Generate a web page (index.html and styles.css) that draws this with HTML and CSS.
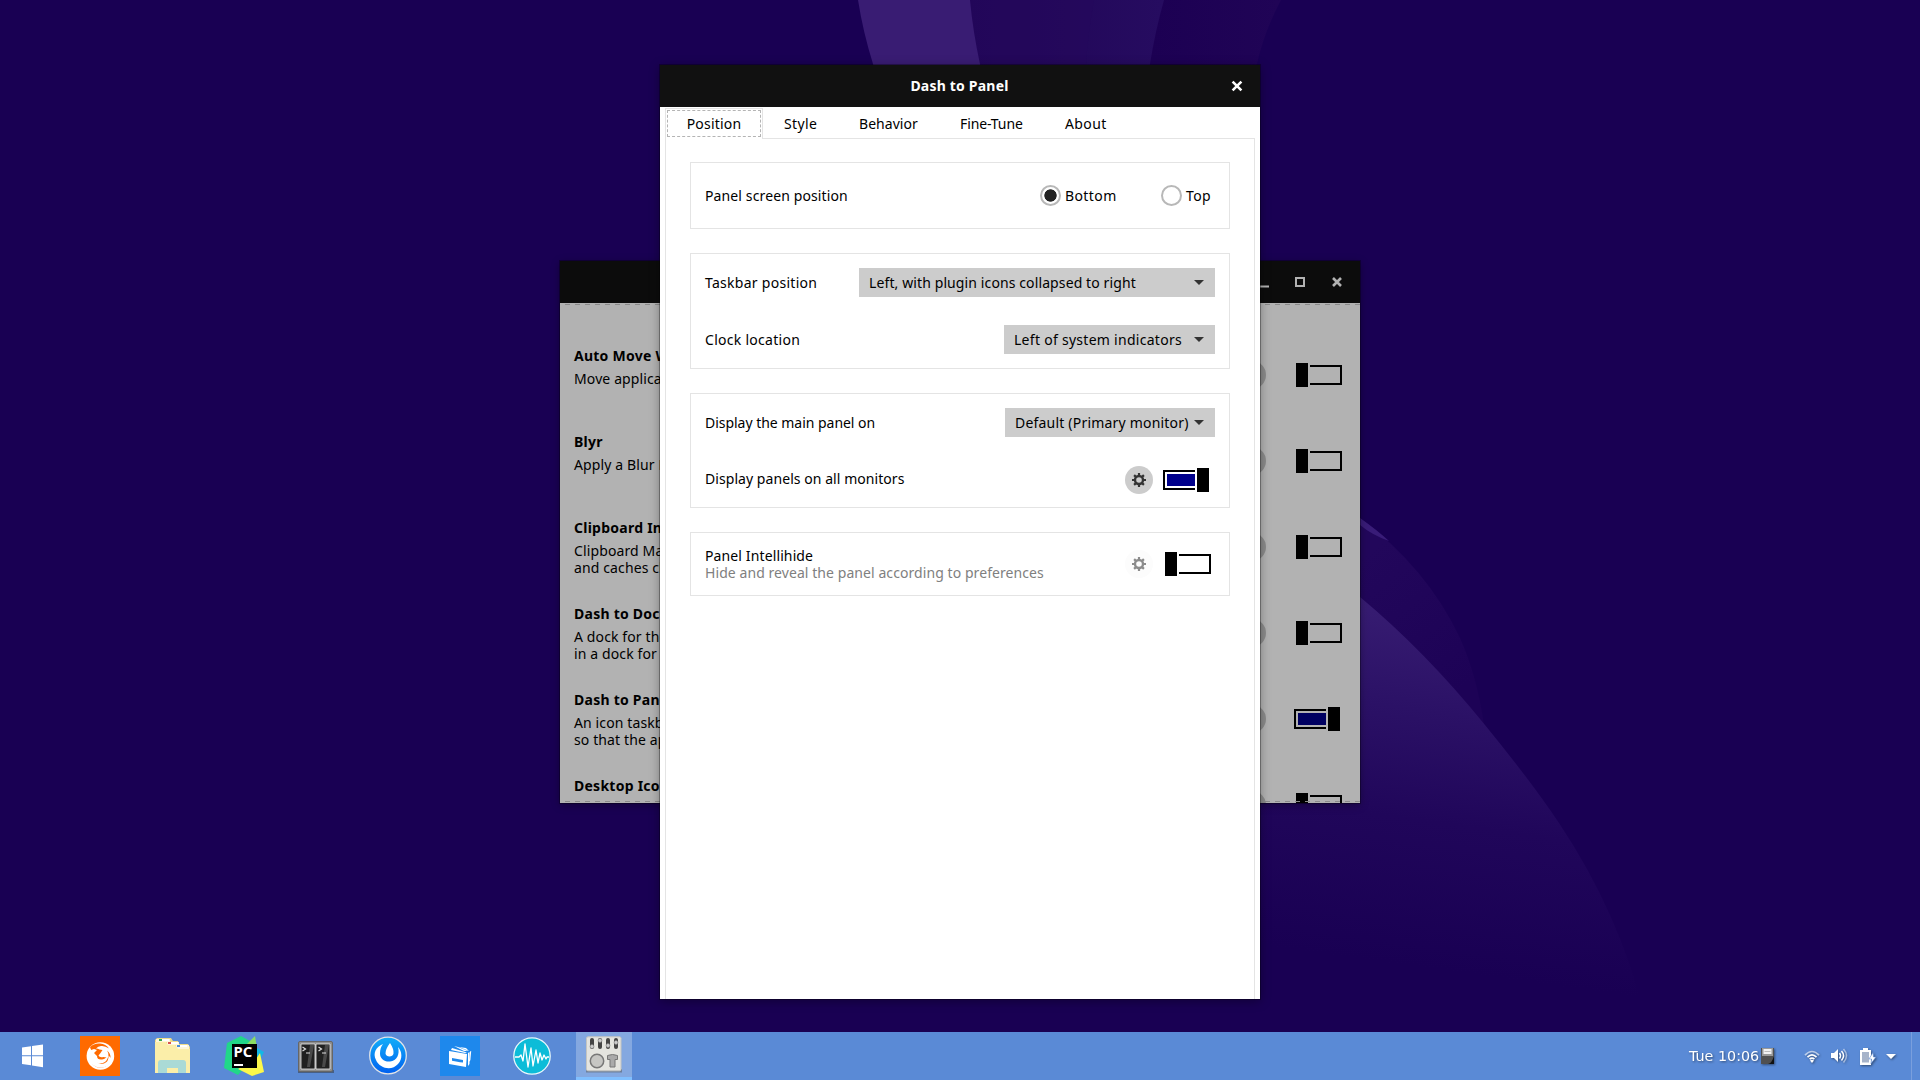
FILE: index.html
```
<!DOCTYPE html>
<html lang="en">
<head>
<meta charset="utf-8">
<title>Dash to Panel</title>
<link rel="stylesheet" href="styles.css">
</head>
<body>
<div class="desktop">
  <svg class="wallpaper" viewBox="0 0 1920 1080" aria-hidden="true">
    <defs>
      <linearGradient id="veil" x1="970" x2="1163" y1="0" y2="0" gradientUnits="userSpaceOnUse"><stop offset="0" stop-color="#200456"/><stop offset="1" stop-color="#260c60"/></linearGradient>
      <linearGradient id="veil2" x1="1150" x2="1280" y1="0" y2="0" gradientUnits="userSpaceOnUse"><stop offset="0" stop-color="#1c0053"/><stop offset="1" stop-color="#200456"/></linearGradient>
      <linearGradient id="outer" x1="1360" x2="1460" y1="560" y2="690" gradientUnits="userSpaceOnUse"><stop offset="0" stop-color="#22075b"/><stop offset="1" stop-color="#1d0256"/></linearGradient>
      <linearGradient id="hill" x1="1420" x2="1370" y1="600" y2="960" gradientUnits="userSpaceOnUse"><stop offset="0" stop-color="#381d73"/><stop offset=".3" stop-color="#2b1166"/><stop offset=".6" stop-color="#20065a"/><stop offset="1" stop-color="#190053"/></linearGradient>
    </defs>
    <path fill="url(#veil2)" d="M1160 0h121q-17 32-24 64l-12 50H1140z"/>
    <path fill="url(#veil)" d="M969 0h195q-9 32-14 64l-4 40H982z"/>
    <path fill="#24085c" d="M969 0h125q-6 32-8 64v40H982z" opacity=".6"/>
    <path fill="#391c73" d="M858 0h112q3 32 10 64l6 30H880l-7-30Q863 32 858 0z"/>
    <path fill="url(#outer)" d="M1340 503l20 15q67 50 100 120 17 38 24 87l-40 80h-104z"/>
    <path fill="#391c78" d="M1340 503l20 15q17 12 29 23-17-6-29-16l-20-14z"/>
    <path fill="url(#hill)" d="M1300 550l60 47q65 54 125 128 45 55 74 98 60 90 85 190H1000V803h300z"/>
  </svg>

  <section class="window extensions">
    <header class="titlebar">
      <svg class="win-icon" viewBox="0 0 12 12"><path d="M1 10.5h11" stroke-width="2"/></svg>
      <svg class="win-icon" viewBox="0 0 12 12"><path d="M2 2h8v8H2z" stroke-width="2"/></svg>
      <svg class="win-icon" viewBox="0 0 12 12"><path d="M2 2l8 8M10 2l-8 8" stroke-width="2.6"/></svg>
    </header>
    <div class="ext-list">
      <div class="ext"><div class="ext-text"><b>Auto Move W</b><p>Move applica</p></div><i class="ext-gear"></i><i class="switch"></i></div>
      <div class="ext"><div class="ext-text"><b>Blyr</b><p>Apply a Blur E</p></div><i class="ext-gear"></i><i class="switch"></i></div>
      <div class="ext"><div class="ext-text"><b>Clipboard Ind</b><p>Clipboard Ma<br>and caches cl</p></div><i class="ext-gear"></i><i class="switch"></i></div>
      <div class="ext"><div class="ext-text"><b>Dash to Dock</b><p>A dock for the<br>in a dock for</p></div><i class="ext-gear"></i><i class="switch"></i></div>
      <div class="ext"><div class="ext-text"><b>Dash to Pane</b><p>An icon taskb<br>so that the ap</p></div><i class="ext-gear"></i><i class="switch on"></i></div>
      <div class="ext"><div class="ext-text"><b>Desktop Icon</b></div><i class="ext-gear"></i><i class="switch"></i></div>
    </div>
  </section>

  <section class="window dialog">
    <header class="titlebar">
      <h1>Dash to Panel</h1>
      <svg class="win-icon" viewBox="0 0 12 12"><path d="M1.6 1.6l8.8 8.8M10.4 1.6l-8.8 8.8" stroke-width="2.6"/></svg>
    </header>
    <nav class="tabs">
      <div class="tab active"><span>Position</span></div>
      <div class="tab style">Style</div>
      <div class="tab behavior">Behavior</div>
      <div class="tab fine">Fine-Tune</div>
      <div class="tab about">About</div>
    </nav>
    <div class="page">
      <div class="group single">
        <div class="row">
          <span class="label">Panel screen position</span>
          <span class="radio checked"><i></i>Bottom</span>
          <span class="radio"><i></i>Top</span>
        </div>
      </div>
      <div class="group taskbar-group">
        <div class="row"><span class="label wide">Taskbar position</span><span class="combo c1">Left, with plugin icons collapsed to right</span></div>
        <div class="row"><span class="label wide">Clock location</span><span class="combo c2">Left of system indicators</span></div>
      </div>
      <div class="group monitor-group">
        <div class="row"><span class="label tight">Display the main panel on</span><span class="combo c3">Default (Primary monitor)</span></div>
        <div class="row">
          <span class="label">Display panels on all monitors</span>
          <span class="gear"><svg viewBox="-7 -7 14 14"><circle r="4" stroke-width="2.4"/><path stroke-width="2.2" d="M0-7v2.500M0 7V4.500M-7 0h2.500M7 0H4.500M-4.900-4.900l1.800 1.800M4.900-4.900L3.100-3.100M-4.900 4.900l1.800-1.800M4.900 4.900L3.100 3.100"/></svg></span>
          <i class="switch on"></i>
        </div>
      </div>
      <div class="group hide-group">
        <div class="row">
          <span class="label">Panel Intellihide<small>Hide and reveal the panel according to preferences</small></span>
          <span class="gear off"><svg viewBox="-7 -7 14 14"><circle r="4" stroke-width="2.4"/><path stroke-width="2.2" d="M0-7v2.500M0 7V4.500M-7 0h2.500M7 0H4.500M-4.900-4.900l1.800 1.800M4.900-4.900L3.100-3.100M-4.900 4.900l1.800-1.800M4.900 4.900L3.100 3.100"/></svg></span>
          <i class="switch"></i>
        </div>
      </div>
    </div>
  </section>

  <footer class="panel">
    <svg class="start" viewBox="0 0 22 24"><path fill="#fff" d="M0 3.600l9-1.300v9H0zM10 2.100L21 .5v10.800H10zM0 12.300h9v9L0 20zM10 12.300h11v11L10 21.600z"/></svg>
    <div class="apps">
      <div class="app"><svg viewBox="0 0 40 40"><path fill="#ff6a00" d="M0 0h40v40H0z"/><circle cx="20.400" cy="20" r="13.800" fill="#fff"/><path fill="#ff6a00" d="M10 11q4-4 10-3.500 6 .5 9 5-4-3-8-2.500-3 .2-5 2.500 2 0 3.500 1l3 .5-2 3-2 2.500q1 2.500 5 1.500l3 .5q-2 1-3 2-3 2-6 1l-4-1.500q2 4 6 4.500 6 0 8-5 2-4-.5-8 4 3 3.500 8-1 6-6 8.500-6 2-10.500-1.500Q10 26 10 19l1-5z"/><path fill="#fff" d="M9 12l2 2 3-1 3 1-3 3 3 3q0 4 5 3.500l3-.5q-2 3-5 3l-4-1q3 4 8 2.500 5-2 4.500-8l3 3q-1 7-8 9-8 1-12-4-5-7-2.500-15.500z"/></svg></div>
      <div class="app"><svg class="folder" viewBox="0 0 40 40"><path fill="#f0dc8a" d="M4 4l2-2h14l2 3h5l1 3h9l2 3v26H4z"/><path fill="#fff6d8" d="M5 3h14v3H5zM16 6h12v3H16zM25 9h13v4H25z"/><path fill="#fff" d="M10 3h8v2h-8zM19 6h8v2h-8zM29 9h7v2h-7z"/><path fill="#35a850" d="M8 3h3v2H8z"/><path fill="#d9534f" d="M17 6h3v2h-3z"/><path fill="#4a8fd8" d="M26 9h3v2h-3z"/><path fill="#fbeea9" d="M4 6h11l2 3h7l3 4h12v24H4z"/><path fill="#a5d8d8" opacity=".95" d="M7 27q0-3 3-3h22q3 0 3 3v10h-8v-5H16v5H7z"/></svg></div>
      <div class="app"><svg viewBox="0 0 40 40"><path fill="#21d789" d="M3 7L17 0l11 6 4 14-18 19-14-7z"/><path fill="#8bdc62" d="M23 8l8-8 2 12z"/><path fill="#12b8e8" d="M28 9l12 7-5 10z"/><path fill="#fcf84a" d="M14 33l18-10 4-6 4 19-12 4z"/><path d="M8 8h25v24H8z"/><path fill="#fff" d="M10 28h9v2h-9z"/><text x="9.500" y="21" class="pc" textLength="19" lengthAdjust="spacingAndGlyphs">PC</text></svg></div>
      <div class="app"><svg viewBox="0 0 40 40"><path fill="#333" opacity=".5" d="M2 34h36v3H2z"/><rect x="2.500" y="5.500" width="34" height="30" rx="1.500" fill="#8e8e8e" stroke="#666"/><path fill="#202020" stroke="#eee" stroke-width=".8" d="M5 8h14v25H5zM20 8h14v25H20z"/><path fill="#5b5b5b" opacity=".7" d="M14 9h4l-4 22h-3zM29 9h4l-4 22h-3z"/><path fill="none" stroke="#ddd" stroke-width="1.200" d="M6.500 11l3 2-3 2M10 17h4M22.500 11l3 2-3 2M26 17h4"/></svg></div>
      <div class="app"><svg viewBox="0 0 40 40"><defs><linearGradient id="mm" x2="0" y2="1"><stop stop-color="#12aef8"/><stop offset="1" stop-color="#0060f0"/></linearGradient></defs><circle cx="20" cy="19.500" r="18.300" fill="url(#mm)" stroke="#e1e4e8" stroke-width="1.300"/><path fill="#fff" d="M15 8C8 11 4.500 17 8 24c4 9 16 11 22 4 5-5 4-13 0-17 2 7-1 14-8 14.500-6 .5-10-3-10-8 0-4 1-7 3-9.500zM22 7q4 6 3.500 10.500c-.5 4-7.500 4-8 0Q17.500 13 22 7z"/></svg></div>
      <div class="app"><svg viewBox="0 0 40 40"><path fill="#1e88ec" d="M0 0h40v40H0z"/><path fill="#fff" d="M9 15l18 3-1 13-17-3zM12 12l15 4.500-2 .5-14-3zM14 10l4 1 10 4h-4zM19 11l7 1 3 3zM28 17l1.500-1v12L28 30zM30 15.500l1.200-.5-.8 9-1 2z"/><path fill="#1e88ec" d="M12 22l11 2v2.500l-3-.2-8-1.500z"/></svg></div>
      <div class="app"><svg viewBox="0 0 40 40"><circle cx="20" cy="20" r="18.200" fill="#0cbcd8" stroke="#e9f8fb" stroke-width="1.300"/><path fill="none" stroke="#fff" stroke-width="1.300" stroke-linejoin="round" d="M3 21h4l2-2 2 6 2-17 3 23 3-19 2 18 3-16 2 13 2-10 2 7 2-5 2 4 1-2h2"/></svg></div>
      <div class="app current"><svg viewBox="0 0 40 40"><path fill="#555" opacity=".5" d="M2 33h36v3.500H2z"/><rect x="2.500" y=".8" width="34.500" height="34" rx="1.500" fill="#e4e4df" stroke="#c5c5c0"/><g fill="#444"><rect x="6" y="2" width="4" height="11" rx="2"/><rect x="14" y="2" width="4" height="11" rx="2"/><rect x="22" y="2" width="4" height="11" rx="2"/><rect x="30" y="2" width="4" height="11" rx="2"/></g><g fill="#ccc" stroke="#777" stroke-width=".5"><circle cx="8" cy="10.500" r="2"/><circle cx="16" cy="4.500" r="2"/><circle cx="24" cy="9.500" r="2"/><circle cx="32" cy="6.500" r="2"/></g><circle cx="13" cy="25" r="6.700" fill="#c6c6c3" stroke="#777" stroke-width="1.500"/><path fill="#aaa" stroke="#777" d="M23.500 19.500q5-2 10 0v4h-2.500V31h-5v-7.500h-2.500z"/></svg></div>
    </div>
    <div class="tray">
      <span class="clock">Tue 10:06</span>
      <svg class="disk" viewBox="0 0 13 16"><path fill="#505050" d="M0 0h13v16H0z"/><path fill="#999" d="M1 0h11v8H1z"/><path fill="#f2f2f2" d="M2.500 1h8v5h-8z"/><path fill="#bbb" d="M3.500 3h6v1h-6z"/><path fill="#111" d="M13 8v8H7q4-1 6-8z"/></svg>
      <svg class="wifi" viewBox="0 0 16 13"><g fill="none" stroke="#fff" stroke-width="1.700"><path opacity=".6" d="M1 5.200q7-7.400 14 0"/><path d="M3.500 7.200q4.500-4.500 9 0"/><path d="M5.600 9.200q2.400-2.300 4.800 0"/></g><path fill="#fff" d="M6 10.500q2-1.600 4 0L8 13z"/></svg>
      <svg class="volume" viewBox="0 0 17 16"><path fill="#fff" d="M0 5h3l4-4v13l-4-4H0z"/><g fill="none" stroke="#fff" stroke-width="1.500"><path d="M8.500 5q2 2.500 0 5.500"/><path d="M10.500 3q4 4.500 0 9.500"/><path opacity=".5" d="M12.500 1q6 6.500 0 13.500"/></g></svg>
      <svg class="battery" viewBox="0 0 16 17"><path fill="#fff" d="M0 2h3V0h5v2h3v15H0z"/><path fill="#a7b4ca" d="M2 4h7v10.500H2z"/><path fill="#fff" stroke="#5a8ad6" stroke-width=".6" d="M13 4.500L9 11h2.500l-.5 4.500L16 9h-2.500z"/></svg>
      <svg class="arrow" viewBox="0 0 10 5"><path fill="#fff" d="M0 0h10L5 5z"/></svg>
    </div>
    <div class="show-desktop"></div>
  </footer>
</div>
</body>
</html>
```
FILE: styles.css
```
* { box-sizing: border-box; }

body {
  margin: 0;
  font: 14px/17px "Noto Sans", "Open Sans", sans-serif;
  letter-spacing: .12px;
  color: #000;
}

.desktop {
  position: relative;
  display: flex;
  flex-direction: column;
  justify-content: flex-end;
  width: 1920px;
  height: 1080px;
  overflow: hidden;
  background: #190053;
}

.wallpaper { position: absolute; inset: 0; width: 1920px; height: 1080px; }
svg { display: block; }

/* Windows */
.window { position: absolute; display: flex; flex-direction: column; }
.titlebar { display: flex; align-items: center; height: 42px; flex: none; background: #111; color: #fff; }
.win-icon { width: 12px; height: 12px; fill: none; stroke: #fff; }

.extensions {
  left: 560px;
  top: 261px;
  width: 800px;
  height: 542px;
  background: #b2b2b2;
  box-shadow: 0 0 0 1px rgba(0, 0, 0, .3), 0 2px 8px rgba(0, 0, 0, .35);
}
.extensions .titlebar { justify-content: flex-end; gap: 25px; padding-right: 17px; background: #0c0c0c; }
.extensions .win-icon { stroke: #b2b2b2; }

.ext-list { position: relative; flex: 1; overflow: hidden; padding-top: 29px; }
.ext-list::before,
.ext-list::after {
  content: "";
  position: absolute;
  left: 5px;
  right: 0;
  height: 1px;
  background: repeating-linear-gradient(90deg, #8b8b8b 0 5px, transparent 5px 10px);
}
.ext-list::before { top: 1px; }
.ext-list::after { bottom: 1px; }

.ext { display: flex; align-items: center; height: 86px; padding: 0 16px 0 14px; }
.ext-text { align-self: flex-start; margin-top: 15px; white-space: nowrap; }
.ext-text b { display: block; letter-spacing: .25px; }
.ext-text p { margin: 6px 0 0; }
.ext-gear { width: 28px; height: 28px; margin-left: auto; border-radius: 50%; background: #8b8b8b; }
.ext .switch { margin-left: 28px; }

/* Switches */
.switch {
  flex: none;
  width: 50px;
  height: 24px;
  background:
    linear-gradient(#000, #000) 2px 0 / 12px 24px,
    linear-gradient(#000, #000) 16px 2px / 32px 2px,
    linear-gradient(#000, #000) 16px 20px / 32px 2px,
    linear-gradient(#000, #000) 46px 2px / 2px 20px;
  background-repeat: no-repeat;
}
.switch.on {
  --fill: #00008b;
  background:
    linear-gradient(#000, #000) 34px 0 / 12px 24px,
    linear-gradient(#000, #000) 0 2px / 32px 2px,
    linear-gradient(#000, #000) 0 20px / 32px 2px,
    linear-gradient(#000, #000) 0 2px / 2px 20px,
    linear-gradient(var(--fill), var(--fill)) 4px 6px / 28px 12px;
  background-repeat: no-repeat;
}
.extensions .switch.on { --fill: #000061; }

/* Preferences dialog */
.dialog {
  left: 660px;
  top: 65px;
  width: 600px;
  height: 934px;
  background: #fff;
  box-shadow: 0 0 0 1px rgba(0, 0, 0, .3), 0 2px 10px rgba(0, 0, 0, .35);
}
.dialog .titlebar { padding: 0 17px; }
.dialog h1 { flex: 1; margin: 0 0 2px 11px; font-size: 14px; line-height: 17px; text-align: center; letter-spacing: .2px; }

.tabs { display: flex; height: 32px; margin: 0 5px; padding-top: 1px; border-bottom: 1px solid #e4e4e4; }
.tab { padding-top: 7px; letter-spacing: .2px; }
.tab.active {
  width: 98px;
  height: 32px;
  padding: 1px;
  border: 1px solid #e4e4e4;
  border-bottom: 0;
  background: #fff;
}
.tab.active span { display: block; height: 27px; padding-top: 4px; border: 1px dashed #b4b4b4; text-align: center; }
.tab.style { margin-left: 21px; width: 75px; letter-spacing: .35px; }
.tab.behavior { width: 101px; letter-spacing: .05px; }
.tab.fine { width: 105px; letter-spacing: -.1px; }
.tab.about { letter-spacing: .4px; }

.page { flex: 1; margin: 0 5px; padding: 23px 24px 0; border: solid #e4e4e4; border-width: 0 1px; background: #fff; }
.group { display: flex; flex-direction: column; border: 1px solid #e4e4e4; margin-bottom: 24px; padding: 14px 14px 0; }
.row { display: flex; flex: none; align-items: center; height: 29px; margin-bottom: 28px; }
.label { flex: 1; }
.label.wide { letter-spacing: .28px; }
.label.tight { letter-spacing: -.03px; }
.single { height: 67px; justify-content: center; padding-top: 0; }
.single .row { margin: 0; }
.taskbar-group { height: 116px; }
.monitor-group { height: 115px; }
.monitor-group .row:last-child .label { margin-bottom: 2px; letter-spacing: .06px; }
.hide-group { height: 64px; padding-top: 16px; }
.label small { display: block; font-size: 14px; color: #808080; letter-spacing: .07px; }

.radio { display: flex; align-items: center; gap: 4px; letter-spacing: .4px; }
.radio i { display: block; width: 21px; height: 21px; border: 2px solid #b8b8b8; border-radius: 50%; }
.radio.checked { width: 121px; }
.radio.checked i { background: radial-gradient(circle, #222 5.800px, transparent 6.500px); }
.radio:last-child { width: 54px; }

.combo { display: flex; align-items: center; height: 29px; padding: 0 11px 0 10px; background: #ccc; letter-spacing: .2px; white-space: nowrap; }
.combo::after { content: ""; margin-left: auto; border: 5px solid transparent; border-top-color: #333; border-bottom: 0; }
.c1 { width: 356px; letter-spacing: .11px; }
.c2 { width: 211px; letter-spacing: .28px; }
.c3 { width: 210px; }

.gear { display: grid; place-items: center; width: 28px; height: 28px; margin-right: 10px; border-radius: 50%; background: #ccc; }
.gear svg { width: 14px; height: 14px; fill: none; stroke: #333; }
.gear.off { background: #fcfcfc; }
.gear.off svg { stroke: #8c8c8c; }
.monitor-group .switch, .hide-group .switch { margin-right: 2px; }

/* Bottom panel */
.panel { position: relative; display: flex; align-items: center; height: 48px; background: #5a8ad6; }
.start { width: 22px; height: 24px; margin-left: 22px; }
.apps { display: flex; margin-left: 20px; }
.app { width: 72px; height: 48px; padding: 4px 16px; }
.app svg { width: 40px; height: 40px; }
.app .folder { margin-left: -1px; }
.app.current { width: 56px; margin-left: 8px; padding: 4px 8px; background: #84a8e0; border-bottom: 3px solid #80bfff; }
.pc { font: bold 14.500px "Noto Sans", sans-serif; fill: #fff; }

.tray { display: flex; align-items: center; margin-left: auto; filter: drop-shadow(1px 1px 1px rgba(0, 0, 0, .45)); }
.clock { width: 72px; font: 14.300px/20px "DejaVu Sans", sans-serif; letter-spacing: 0; color: #fff; white-space: nowrap; }
.disk { width: 13px; height: 16px; margin-right: 30px; }
.wifi { width: 16px; height: 13px; margin-right: 11px; }
.volume { width: 17px; height: 16px; margin-right: 12px; }
.battery { width: 16px; height: 17px; margin-right: 10px; }
.arrow { width: 10px; height: 5px; margin-right: 15px; }
.show-desktop { width: 9px; height: 48px; border-left: 1px solid #7a9fdd; }
```
